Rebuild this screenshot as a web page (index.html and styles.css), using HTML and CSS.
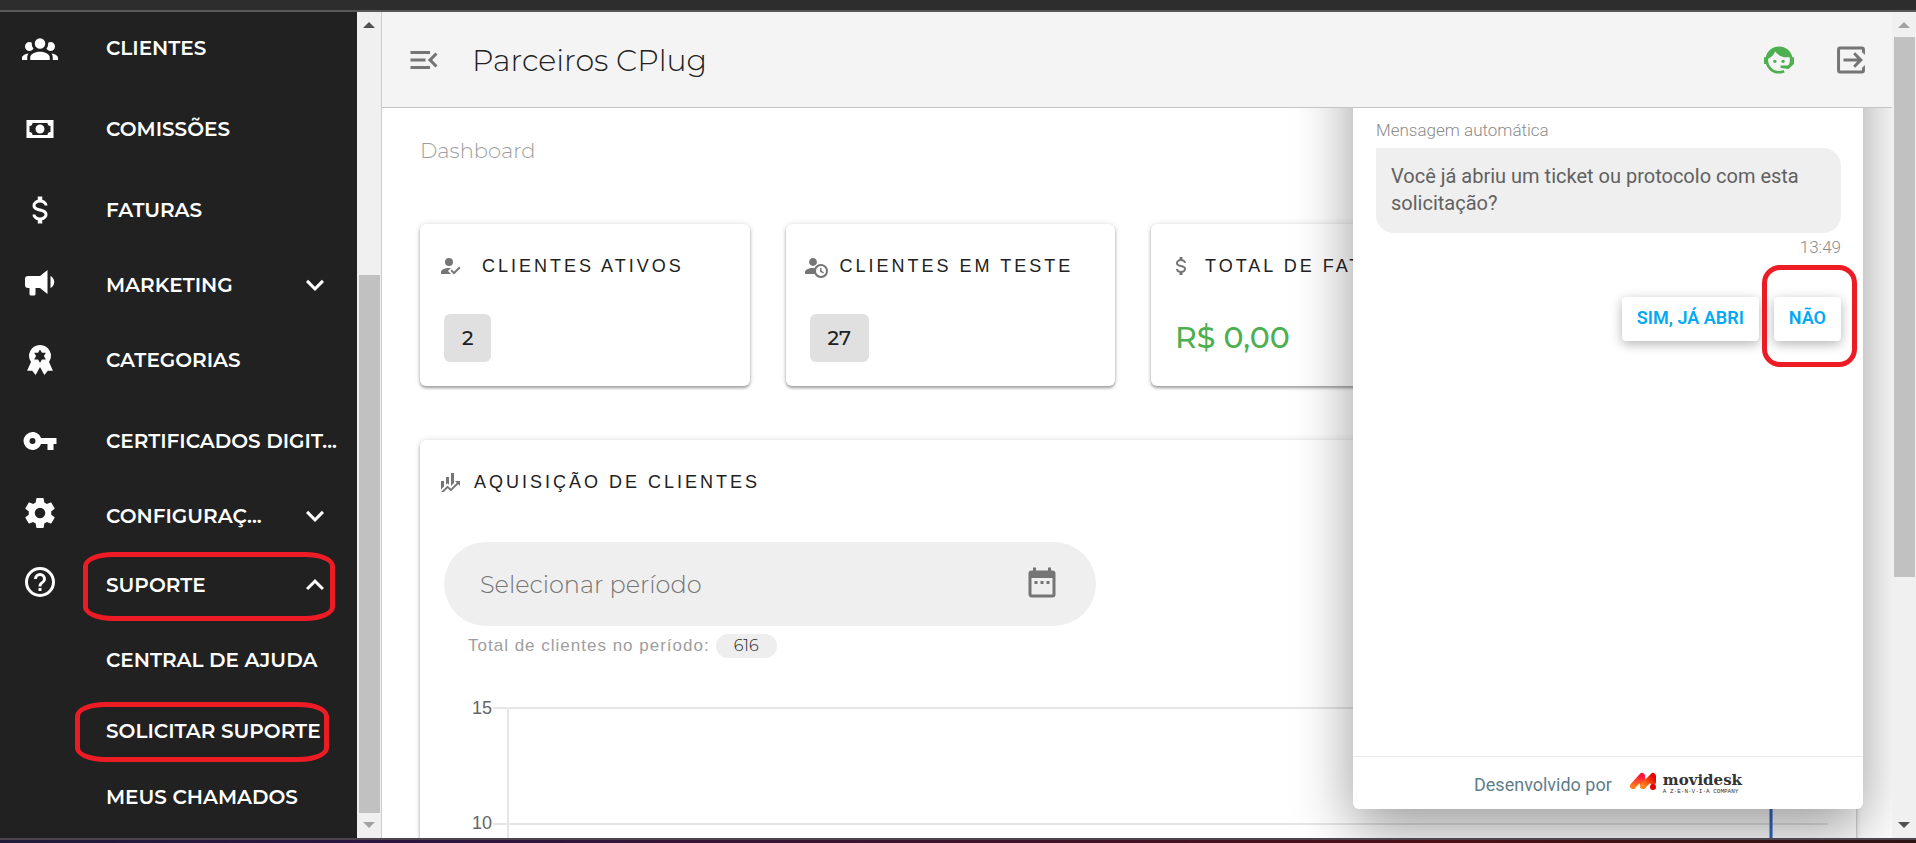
FILE: index.html
```html
<!DOCTYPE html>
<html lang="pt-BR">
<head>
  <meta charset="utf-8">
  <title>Parceiros CPlug</title>
  <link rel="stylesheet" href="styles.css">
</head>
<body>
<div class="window-top"></div>
<div class="app">
  <aside class="sidebar">
    <nav class="menu">
      <a class="menu-item" href="#">
        <svg class="icon" viewBox="0 0 24 24"><path d="M12,5.5A3.5,3.5 0 0,1 15.5,9A3.5,3.5 0 0,1 12,12.5A3.5,3.5 0 0,1 8.5,9A3.5,3.5 0 0,1 12,5.5M5,8C5.56,8 6.08,8.15 6.53,8.42C6.38,9.85 6.8,11.27 7.66,12.38C7.16,13.34 6.16,14 5,14A3,3 0 0,1 2,11A3,3 0 0,1 5,8M19,8A3,3 0 0,1 22,11A3,3 0 0,1 19,14C17.84,14 16.84,13.34 16.34,12.38C17.2,11.27 17.62,9.85 17.47,8.42C17.92,8.15 18.44,8 19,8M5.5,18.25C5.5,16.18 8.41,14.5 12,14.5C15.59,14.5 18.5,16.18 18.5,18.25V20H5.5V18.25M0,20V18.5C0,17.11 1.89,15.94 4.45,15.6C3.86,16.28 3.5,17.22 3.5,18.25V20H0M24,20H20.5V18.25C20.5,17.22 20.14,16.28 19.55,15.6C22.11,15.94 24,17.11 24,18.5V20Z"/></svg>
        <span class="menu-label">CLIENTES</span>
      </a>
      <a class="menu-item" href="#">
        <svg class="icon" viewBox="0 0 24 24"><path d="M3,6H21V18H3V6M12,9A3,3 0 0,1 15,12A3,3 0 0,1 12,15A3,3 0 0,1 9,12A3,3 0 0,1 12,9M7,8A2,2 0 0,1 5,10V14A2,2 0 0,1 7,16H17A2,2 0 0,1 19,14V10A2,2 0 0,1 17,8H7Z"/></svg>
        <span class="menu-label">COMISSÕES</span>
      </a>
      <a class="menu-item" href="#">
        <svg class="icon" viewBox="0 0 24 24"><path d="M7,15H9C9,16.08 10.37,17 12,17C13.63,17 15,16.08 15,15C15,13.9 13.96,13.5 11.76,12.97C9.64,12.44 7,11.78 7,9C7,7.21 8.47,5.69 10.5,5.18V3H13.5V5.18C15.53,5.69 17,7.21 17,9H15C15,7.92 13.63,7 12,7C10.37,7 9,7.92 9,9C9,10.1 10.04,10.5 12.24,11.03C14.36,11.56 17,12.22 17,15C17,16.79 15.53,18.31 13.5,18.82V21H10.5V18.82C8.47,18.31 7,16.79 7,15Z"/></svg>
        <span class="menu-label">FATURAS</span>
      </a>
      <button class="menu-item group" type="button">
        <svg class="icon" viewBox="0 0 24 24"><path d="M12,8H4A2,2 0 0,0 2,10V14A2,2 0 0,0 4,16H5V20A1,1 0 0,0 6,21H8A1,1 0 0,0 9,20V16H12L17,20V4L12,8M21.5,12C21.5,13.71 20.54,15.26 19,16V8C20.53,8.75 21.5,10.3 21.5,12Z"/></svg>
        <span class="menu-label">MARKETING</span>
        <svg class="chevron" viewBox="0 0 24 24"><path d="M7.41,8.58L12,13.17L16.59,8.58L18,10L12,16L6,10Z"/></svg>
      </button>
      <a class="menu-item" href="#">
        <svg class="icon" viewBox="0 0 24 24"><path fill-rule="evenodd" d="M12,2A7.3,7.3 0 0,1 18,13.4L20.6,19.2L17.2,19.1L14.9,22L12,16.6L9.1,22L6.8,19.1L3.4,19.2L6,13.4A7.3,7.3 0 0,1 12,2M12,5L10.7,7.2L8.1,7.1L9.4,9.4L8.1,11.7L10.7,11.6L12,13.8L13.3,11.6L15.9,11.7L14.6,9.4L15.9,7.1L13.3,7.2Z"/></svg>
        <span class="menu-label">CATEGORIAS</span>
      </a>
      <a class="menu-item" href="#">
        <svg class="icon" viewBox="0 0 24 24"><path d="M7,14A2,2 0 0,1 5,12A2,2 0 0,1 7,10A2,2 0 0,1 9,12A2,2 0 0,1 7,14M12.65,10C11.83,7.67 9.61,6 7,6A6,6 0 0,0 1,12A6,6 0 0,0 7,18C9.61,18 11.83,16.33 12.65,14H17V18H21V14H23V10H12.65Z"/></svg>
        <span class="menu-label">CERTIFICADOS DIGIT...</span>
      </a>
      <button class="menu-item group" type="button">
        <svg class="icon" viewBox="0 0 24 24"><path d="M12,15.5A3.5,3.5 0 0,1 8.5,12A3.5,3.5 0 0,1 12,8.5A3.5,3.5 0 0,1 15.5,12A3.5,3.5 0 0,1 12,15.5M19.43,12.97C19.47,12.65 19.5,12.33 19.5,12C19.5,11.67 19.47,11.34 19.43,11L21.54,9.37C21.73,9.22 21.78,8.95 21.66,8.73L19.66,5.27C19.54,5.05 19.27,4.96 19.05,5.05L16.56,6.05C16.04,5.66 15.5,5.32 14.87,5.07L14.5,2.42C14.46,2.18 14.25,2 14,2H10C9.75,2 9.54,2.18 9.5,2.42L9.13,5.07C8.5,5.32 7.96,5.66 7.44,6.05L4.95,5.05C4.73,4.96 4.46,5.05 4.34,5.27L2.34,8.73C2.21,8.95 2.27,9.22 2.46,9.37L4.57,11C4.53,11.34 4.5,11.67 4.5,12C4.5,12.33 4.53,12.65 4.57,12.97L2.46,14.63C2.27,14.78 2.21,15.05 2.34,15.27L4.34,18.73C4.46,18.95 4.73,19.03 4.95,18.95L7.44,17.94C7.96,18.34 8.5,18.68 9.13,18.93L9.5,21.58C9.54,21.82 9.75,22 10,22H14C14.25,22 14.46,21.82 14.5,21.58L14.87,18.93C15.5,18.67 16.04,18.34 16.56,17.94L19.05,18.95C19.27,19.03 19.54,18.95 19.66,18.73L21.66,15.27C21.78,15.05 21.73,14.78 21.54,14.63L19.43,12.97Z"/></svg>
        <span class="menu-label">CONFIGURAÇ...</span>
        <svg class="chevron" viewBox="0 0 24 24"><path d="M7.41,8.58L12,13.17L16.59,8.58L18,10L12,16L6,10Z"/></svg>
      </button>
      <button class="menu-item group" type="button">
        <svg class="icon" viewBox="0 0 24 24"><path d="M11,18H13V16H11V18M12,2A10,10 0 0,0 2,12A10,10 0 0,0 12,22A10,10 0 0,0 22,12A10,10 0 0,0 12,2M12,20C7.59,20 4,16.41 4,12C4,7.59 7.59,4 12,4C16.41,4 20,7.59 20,12C20,16.41 16.41,20 12,20M12,6A4,4 0 0,0 8,10H10A2,2 0 0,1 12,8A2,2 0 0,1 14,10C14,12 11,11.75 11,15H13C13,12.75 16,12.5 16,10A4,4 0 0,0 12,6Z"/></svg>
        <span class="menu-label">SUPORTE</span>
        <svg class="chevron" viewBox="0 0 24 24"><path d="M7.41,15.41L12,10.83L16.59,15.41L18,14L12,8L6,14Z"/></svg>
        <span class="marker marker-group"></span>
      </button>
      <a class="menu-item sub" href="#"><span class="menu-label">CENTRAL DE AJUDA</span></a>
      <a class="menu-item sub short" href="#"><span class="menu-label">SOLICITAR SUPORTE</span><span class="marker marker-sub"></span></a>
      <a class="menu-item sub last" href="#"><span class="menu-label">MEUS CHAMADOS</span></a>
    </nav>
    <div class="scrollbar scrollbar-menu">
      <svg class="arrow dark" viewBox="0 0 12 6"><path d="M6,0L12,6H0Z"/></svg>
      <div class="thumb"></div>
      <svg class="arrow" viewBox="0 0 12 6"><path d="M0,0H12L6,6Z"/></svg>
    </div>
  </aside>

  <main class="main">
    <header class="header">
      <button class="icon-btn" type="button" aria-label="Menu">
        <svg class="icon" viewBox="0 0 24 24"><path d="M21,15.61L19.59,17L14.58,12L19.59,7L21,8.39L17.44,12L21,15.61M3,6H16V8H3V6M3,13V11H13V13H3M3,18V16H16V18H3Z"/></svg>
      </button>
      <h1 class="title">Parceiros CPlug</h1>
      <button class="icon-btn green" type="button" aria-label="Suporte">
        <svg class="icon" viewBox="0 0 24 24"><path d="M18.72,14.76C19.07,13.91 19.26,13 19.26,12C19.26,11.28 19.15,10.59 18.96,9.95C18.31,10.1 17.63,10.18 16.92,10.18C13.86,10.18 11.15,8.67 9.5,6.34C8.61,8.5 6.91,10.26 4.77,11.22C4.73,11.47 4.73,11.74 4.73,12A7.27,7.27 0 0,0 12,19.27C13.05,19.27 14.06,19.04 14.97,18.63C15.54,19.72 15.8,20.26 15.78,20.26C14.14,20.81 12.87,21.08 12,21.08C9.58,21.08 7.27,20.13 5.57,18.42C4.53,17.38 3.76,16.11 3.33,14.73H2V10.18H3.09C3.93,6.04 7.6,2.92 12,2.92C14.4,2.92 16.71,3.87 18.42,5.58C19.69,6.84 20.54,8.45 20.89,10.18H22V14.67H22V14.69L22,14.73H21.94L18.38,18L13.08,17.4V15.73H17.91L18.72,14.76M9.27,11.77C9.57,11.77 9.86,11.89 10.07,12.11C10.28,12.32 10.4,12.61 10.4,12.91C10.4,13.21 10.28,13.5 10.07,13.71C9.86,13.92 9.57,14.04 9.27,14.04C8.64,14.04 8.13,13.54 8.13,12.91C8.13,12.28 8.64,11.77 9.27,11.77M14.72,11.77C15.35,11.77 15.85,12.28 15.85,12.91C15.85,13.54 15.35,14.04 14.72,14.04C14.09,14.04 13.58,13.54 13.58,12.91A1.14,1.14 0 0,1 14.72,11.77Z"/></svg>
      </button>
      <button class="icon-btn" type="button" aria-label="Sair">
        <svg class="icon" viewBox="0 0 24 24"><path d="M21.3,8.6L19.3,6.6V5H4.7V19H19.3V17.4L21.3,15.4V19A2,2 0 0,1 19.3,21H4.7A2,2 0 0,1 2.7,19V5A2,2 0 0,1 4.7,3H19.3A2,2 0 0,1 21.3,5V8.6M14.8,17.2L13.4,15.8L16.1,13H7V11H16.1L13.4,8.2L14.8,6.8L20,12L14.8,17.2Z"/></svg>
      </button>
    </header>

    <div class="content">
      <p class="breadcrumb">Dashboard</p>
      <div class="cards">
        <section class="card">
          <h2 class="card-title">
            <svg class="card-icon wide" viewBox="0 0 24 24"><path d="M21.1,12.5L22.5,13.91L15.97,20.5L12.5,17L13.9,15.59L15.97,17.67L21.1,12.5M10,17L13,20H3V18C3,15.79 6.58,14 11,14L12.89,14.11L10,17M11,4A4,4 0 0,1 15,8A4,4 0 0,1 11,12A4,4 0 0,1 7,8A4,4 0 0,1 11,4Z"/></svg>
            CLIENTES ATIVOS
          </h2>
          <span class="count">2</span>
        </section>
        <section class="card">
          <h2 class="card-title">
            <svg class="card-icon" viewBox="0 0 24 24"><path d="M10.63,14.1C12.23,10.58 16.38,9.03 19.9,10.63C23.42,12.23 24.97,16.38 23.37,19.9C22.24,22.4 19.75,24 17,24C14.3,24 11.83,22.44 10.67,20H1V18C1.06,16.86 1.84,15.93 3.34,15.18C4.84,14.43 6.72,14.04 9,14C9.57,14 10.11,14.05 10.63,14.1M9,4C10.12,4.03 11.06,4.42 11.81,5.17C12.56,5.92 12.93,6.86 12.93,8C12.93,9.14 12.56,10.08 11.81,10.83C11.06,11.58 10.12,11.95 9,11.95C7.88,11.95 6.94,11.58 6.19,10.83C5.44,10.08 5.07,9.14 5.07,8C5.07,6.86 5.44,5.92 6.19,5.17C6.94,4.42 7.88,4.03 9,4M17,22A5,5 0 0,0 22,17A5,5 0 0,0 17,12A5,5 0 0,0 12,17A5,5 0 0,0 17,22M16,14H17.5V16.82L19.94,18.23L19.19,19.53L16,17.69V14Z"/></svg>
            CLIENTES EM TESTE
          </h2>
          <span class="count">27</span>
        </section>
        <section class="card">
          <h2 class="card-title">
            <svg class="card-icon" viewBox="0 0 24 24"><path d="M7,15H9C9,16.08 10.37,17 12,17C13.63,17 15,16.08 15,15C15,13.9 13.96,13.5 11.76,12.97C9.64,12.44 7,11.78 7,9C7,7.21 8.47,5.69 10.5,5.18V3H13.5V5.18C15.53,5.69 17,7.21 17,9H15C15,7.92 13.63,7 12,7C10.37,7 9,7.92 9,9C9,10.1 10.04,10.5 12.24,11.03C14.36,11.56 17,12.22 17,15C17,16.79 15.53,18.31 13.5,18.82V21H10.5V18.82C8.47,18.31 7,16.79 7,15Z"/></svg>
            TOTAL DE FATURAS
          </h2>
          <span class="money">R$ 0,00</span>
        </section>
      </div>

      <section class="card chart-card">
        <h2 class="card-title">
          <svg class="card-icon" viewBox="0 0 24 24"><path d="M6,16.5L3,19.44V11H6M11,14.66L9.43,13.32L8,14.64V7H11M16,13L13,16V3H16M18.81,12.81L17,11H22V16L20.21,14.21L13,21.36L9.53,18.34L5.75,22H3L9.47,15.66L13,18.64"/></svg>
          AQUISIÇÃO DE CLIENTES
        </h2>
        <label class="period">
          <input class="period-input" type="text" placeholder="Selecionar período" aria-label="Selecionar período">
          <svg class="icon" viewBox="0 0 24 24"><path d="M9,10V12H7V10H9M13,10V12H11V10H13M17,10V12H15V10H17M19,3A2,2 0 0,1 21,5V19A2,2 0 0,1 19,21H5C3.89,21 3,20.1 3,19V5A2,2 0 0,1 5,3H6V1H8V3H16V1H18V3H19M19,19V8H5V19H19Z"/></svg>
        </label>
        <p class="total">Total de clientes no período: <span class="chip">616</span></p>
        <div class="chart">
          <svg width="100%" height="170">
            <text x="24" y="22" text-anchor="end">15</text>
            <text x="24" y="137" text-anchor="end">10</text>
            <g class="grid">
              <rect x="25" y="15" width="100%" height="2"/>
              <rect x="25" y="131" width="100%" height="2"/>
              <rect x="39" y="15" width="2" height="155"/>
            </g>
            <rect class="bar" x="95.7%" y="100" width="3" height="70"/>
          </svg>
        </div>
      </section>
    </div>

    <section class="chat">
      <div class="chat-body">
        <p class="chat-author">Mensagem automática</p>
        <p class="bubble">Você já abriu um ticket ou protocolo com esta solicitação?</p>
        <p class="time">13:49</p>
        <div class="answers">
          <button class="answer" type="button">SIM, JÁ ABRI</button>
          <button class="answer" type="button">NÃO<span class="marker marker-answer"></span></button>
        </div>
      </div>
      <footer class="chat-footer">
        Desenvolvido por
        <span class="brand">
          <svg class="brand-mark" viewBox="0 0 26 18">
            <defs>
              <linearGradient id="flame" x1="0" y1="1" x2="0" y2="0">
                <stop offset="0" stop-color="#ff7a1a"/>
                <stop offset="1" stop-color="#ff1040"/>
              </linearGradient>
              <linearGradient id="ember" x1="0" y1="1" x2="1" y2="0">
                <stop offset="0" stop-color="#ff8a1f"/>
                <stop offset="1" stop-color="#e60000"/>
              </linearGradient>
            </defs>
            <path d="M3,14L12,4L13,14" fill="none" stroke="url(#flame)" stroke-width="6" stroke-linecap="round" stroke-linejoin="round"/>
            <path d="M13,14L23,4V10" fill="none" stroke="url(#ember)" stroke-width="6" stroke-linecap="round" stroke-linejoin="round"/>
            <circle cx="23" cy="15" r="3" fill="#e60000"/>
          </svg>
          <span class="brand-text">
            <span class="brand-name">movidesk</span>
            <span class="brand-sub">A Z·E·N·V·I·A COMPANY</span>
          </span>
        </span>
      </footer>
    </section>
  </main>

  <div class="scrollbar scrollbar-page">
    <svg class="arrow" viewBox="0 0 12 6"><path d="M6,0L12,6H0Z"/></svg>
    <div class="thumb"></div>
    <svg class="arrow dark" viewBox="0 0 12 6"><path d="M0,0H12L6,6Z"/></svg>
  </div>
</div>
<div class="window-bottom"></div>
</body>
</html>
```
FILE: styles.css
```css
* {
  box-sizing: border-box;
}

body {
  margin: 0;
  height: 100vh;
  display: flex;
  flex-direction: column;
  overflow: hidden;
  font-family: 'Montserrat', 'Inter', sans-serif;
  color: #212121;
}

h1, h2, p {
  margin: 0;
}

button {
  border: 0;
  background: none;
  padding: 0;
  font: inherit;
}

svg {
  fill: currentColor;
}

.window-top {
  height: 12px;
  flex: none;
  background: #2d2d2d;
  border-bottom: 2px solid #5a5757;
}

.window-bottom {
  height: 5px;
  flex: none;
  border-top: 2px solid #4c454c;
  background: linear-gradient(90deg, #201c38, #2a1540 20%, #3a1430 45%, #4a1016 75%, #2c1412);
}

.app {
  flex: 1;
  min-height: 0;
  display: flex;
}

.icon {
  width: 36px;
  height: 36px;
  flex: none;
}

/* sidebar */
.sidebar {
  display: flex;
  flex: none;
  width: 382px;
  overflow: hidden;
  background: #212121;
  border-right: 1px solid #ccc;
}

.menu {
  flex: 1;
  min-width: 0;
  margin-top: -5px;
}

.menu-item {
  position: relative;
  display: flex;
  align-items: center;
  width: 100%;
  height: 81px;
  padding: 0 24px 0 22px;
  color: #fff;
  font-size: 20px;
  font-weight: 600;
  line-height: 24px;
  text-align: left;
  text-decoration: none;
}

.menu-label {
  flex: 1;
  min-width: 0;
  margin-left: 48px;
  white-space: nowrap;
}

.group {
  height: 69px;
}

.group .icon {
  margin-bottom: 6px;
}

.chevron {
  width: 36px;
  height: 36px;
  flex: none;
}

.sub {
  padding-left: 58px;
}

.short {
  height: 62px;
}

.last {
  height: 70px;
}

/* hand-drawn red frames */
.marker {
  position: absolute;
  border: 5px solid #ed1c24;
}

.marker-group {
  inset: 2px 22px -2px 83px;
  border-radius: 30px / 14px;
}

.marker-sub {
  inset: 2px 28px 0 75px;
  border-radius: 30px / 14px;
}

.marker-answer {
  inset: -32px -16px -26px -12px;
  border-radius: 18px;
}

.scrollbar {
  display: flex;
  flex-direction: column;
  align-items: center;
  flex: none;
  width: 24px;
  padding: 10px 0;
  background: #f0f0f0;
}

.scrollbar .thumb {
  background: #c1c1c1;
  width: 21px;
}

.arrow {
  width: 12px;
  height: 6px;
  color: #a3a3a3;
}

.arrow.dark {
  color: #505050;
}

.scrollbar-menu .thumb {
  flex: 1;
  margin: 247px 0 9px;
}

.scrollbar-page .thumb {
  height: 540px;
  margin: 9px 0 auto;
}

/* main */
.main {
  position: relative;
  flex: 1;
  min-width: 0;
  overflow: hidden;
}

.header {
  position: relative;
  z-index: 2;
  display: flex;
  align-items: center;
  height: 96px;
  padding: 0 23px 0 24px;
  background: #f4f4f4;
  border-bottom: 1px solid #c4c4c4;
}

.title {
  flex: 1;
  margin-left: 30px;
  padding-top: 2px;
  font-size: 30px;
  font-weight: 300;
}

.icon-btn {
  display: flex;
  color: #757575;
}

.icon-btn + .icon-btn {
  margin-left: 36px;
}

.icon-btn.green {
  color: #4caf50;
}

.content {
  padding: 31px 36px 0 38px;
}

.breadcrumb {
  color: #9e9e9e;
  font-size: 21px;
  font-weight: 300;
  line-height: 24px;
}

.cards {
  display: grid;
  grid-template-columns: repeat(4, 1fr);
  gap: 36px;
  margin: 61px 10px 54px 0;
}

.card {
  height: 162px;
  padding: 30px 18px 0;
  background: #fff;
  border-radius: 6px;
  box-shadow: 0 2px 3px rgba(0, 0, 0, .35), 0 0 6px rgba(0, 0, 0, .12);
}

.card-title {
  display: flex;
  align-items: center;
  gap: 12px;
  height: 24px;
  font-family: 'Liberation Sans', Arial, sans-serif;
  font-size: 18px;
  font-weight: 400;
  letter-spacing: 3px;
  white-space: nowrap;
}

.card-icon {
  width: 24px;
  height: 24px;
  flex: none;
  color: #757575;
}

.card-icon.wide {
  margin-right: 8px;
}

.count {
  display: inline-block;
  margin: 36px 0 0 6px;
  padding: 0 18px;
  border-radius: 6px;
  background: #e0e0e0;
  font-size: 20px;
  font-weight: 500;
  line-height: 48px;
}

.money {
  display: inline-block;
  margin: 36px 0 0 6px;
  color: #4caf50;
  font-size: 30px;
  font-weight: 500;
  line-height: 48px;
}

.chart-card {
  height: 460px;
}

.period {
  display: flex;
  align-items: center;
  width: 652px;
  height: 84px;
  margin: 48px 0 0 6px;
  padding: 0 36px;
  border-radius: 42px;
  background: #efefef;
  color: #757575;
}

.period-input {
  flex: 1;
  border: 0;
  padding: 0;
  background: none;
  font-family: inherit;
  font-size: 24px;
  font-weight: 300;
}

.period-input::placeholder {
  color: #757575;
}

.total {
  display: flex;
  align-items: center;
  gap: 6px;
  margin: 8px 0 0 30px;
  color: #9e9e9e;
  font-family: 'Liberation Sans', Arial, sans-serif;
  font-size: 17px;
  letter-spacing: 1px;
}

.chip {
  padding: 0 18px;
  border-radius: 12px;
  background: #eee;
  color: #212121;
  font-family: 'Montserrat', 'Inter', sans-serif;
  font-size: 16px;
  font-weight: 300;
  letter-spacing: 0;
  line-height: 24px;
}

.chart {
  margin: 34px 10px 0 30px;
  font-family: 'Liberation Sans', Arial, sans-serif;
  font-size: 18px;
  color: #666;
}

.chart .grid {
  fill: #e6e6e6;
}

.chart .bar {
  fill: #3366cc;
}

/* chat widget */
.chat {
  position: absolute;
  z-index: 1;
  top: 0;
  right: 29px;
  bottom: 29px;
  display: flex;
  flex-direction: column;
  width: 510px;
  background: #fff;
  border-radius: 6px;
  box-shadow: 0 20px 60px rgba(0, 0, 0, .4);
  font-family: 'Roboto', sans-serif;
}

.chat-body {
  flex: 1;
  padding: 106px 22px 0 23px;
}

.chat-author,
.time {
  color: #8c8c8c;
  font-size: 17px;
  font-weight: 300;
  line-height: 24px;
}

.time {
  margin-top: 2px;
  text-align: right;
}

.bubble {
  margin-top: 6px;
  padding: 15px 15px 16px;
  border-radius: 0 18px 18px 18px;
  background: #efefef;
  color: #616161;
  font-size: 20px;
  line-height: 27px;
}

.answers {
  display: flex;
  justify-content: flex-end;
  gap: 15px;
  margin-top: 38px;
}

.answer {
  position: relative;
  height: 44px;
  padding: 0 15px 4px;
  border-radius: 4px;
  background: #fff;
  box-shadow: 0 3px 12px rgba(0, 0, 0, .3);
  color: #03a9f4;
  font-size: 18px;
  font-weight: 600;
}

.chat-footer {
  display: flex;
  align-items: center;
  justify-content: center;
  gap: 18px;
  height: 53px;
  padding-top: 2px;
  border-top: 1px solid #e8e8e8;
  color: #607d8b;
  font-size: 18px;
}

.brand {
  display: flex;
  gap: 7px;
}

.brand-mark {
  width: 26px;
  height: 18px;
}

.brand-text {
  display: flex;
  flex-direction: column;
  color: #333;
}

.brand-name {
  font-family: 'DejaVu Serif', serif;
  font-size: 15px;
  font-weight: 700;
  line-height: 16px;
}

.brand-sub {
  font-family: 'Liberation Mono', monospace;
  font-size: 6px;
  line-height: 8px;
}
```
